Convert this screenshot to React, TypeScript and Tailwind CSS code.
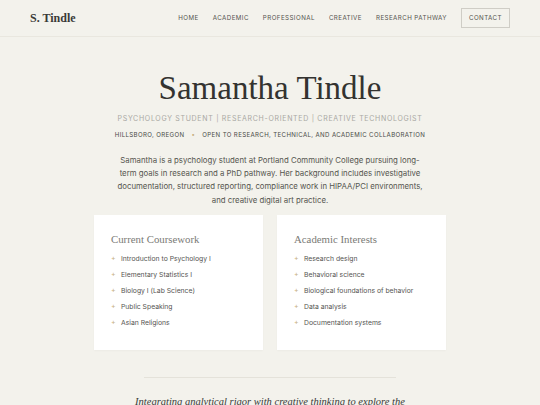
import React from "react";

const serif = { fontFamily: '"Liberation Serif", "DejaVu Serif", serif' };

const nav = ["Home", "Academic", "Professional", "Creative", "Research Pathway"];

const coursework = [
  "Introduction to Psychology I",
  "Elementary Statistics I",
  "Biology I (Lab Science)",
  "Public Speaking",
  "Asian Religions",
];

const interests = [
  "Research design",
  "Behavioral science",
  "Biological foundations of behavior",
  "Data analysis",
  "Documentation systems",
];

function Card({ title, items }: { title: string; items: string[] }) {
  return (
    <div className="bg-white px-[17px] pt-[19px] pb-[22px] shadow-[0_1px_2px_rgba(0,0,0,0.03)]">
      <h3 className="text-[10.8px] leading-none text-[#7a7a76]" style={serif}>
        {title}
      </h3>
      <ul className="mt-[9px] flex flex-col gap-[6px]">
        {items.map((item) => (
          <li key={item} className="flex items-center h-[10px] text-[6.8px] text-[#555552]">
            <span className="w-[10px] text-[#c6ae7d] text-[7px]">+</span>
            {item}
          </li>
        ))}
      </ul>
    </div>
  );
}

export default function App() {
  return (
    <div
      className="min-h-[405px] w-full bg-[#f3f2ec] text-[#333]"
      style={{ fontFamily: 'Inter, "Liberation Sans", sans-serif' }}
    >
      <header className="flex h-[37px] items-center justify-between border-b border-[#e9e7df] pl-[30px] pr-[30px]">
        <div className="text-[12px] font-bold text-[#3a3a38]" style={serif}>
          S. Tindle
        </div>
        <nav className="flex items-center gap-[14px]">
          {nav.map((n) => (
            <span
              key={n}
              className="text-[6.2px] uppercase tracking-[0.07em] text-[#55554f]"
            >
              {n}
            </span>
          ))}
          <span className="border border-[#cfcdc6] px-[7px] py-[4px] text-[6.2px] uppercase tracking-[0.07em] text-[#55554f]">
            Contact
          </span>
        </nav>
      </header>

      <main className="flex flex-col items-center">
        <h1 className="mt-[35px] text-[33px] leading-none text-[#333330]" style={serif}>
          Samantha Tindle
        </h1>
        <p className="mt-[9px] text-[7px] uppercase tracking-[0.1em] text-[#a9a8a3]">
          Psychology Student | Research-Oriented | Creative Technologist
        </p>
        <p className="mt-[5px] flex items-center gap-[7px] text-[6.1px] uppercase tracking-[0.06em] text-[#4a4a47]">
          <span>Hillsboro, Oregon</span>
          <span className="text-[#c6ae7d]">•</span>
          <span>Open to research, technical, and academic collaboration</span>
        </p>
        <p className="mt-[15px] w-[305px] text-center text-[7.8px] leading-[13.3px] text-[#55554f]">
          Samantha is a psychology student at Portland Community College pursuing long-term
          goals in research and a PhD pathway. Her background includes investigative
          documentation, structured reporting, compliance work in HIPAA/PCI environments,
          and creative digital art practice.
        </p>

        <div className="mt-[8px] grid w-[352px] grid-cols-2 gap-[14px]">
          <Card title="Current Coursework" items={coursework} />
          <Card title="Academic Interests" items={interests} />
        </div>

        <div className="mt-[27px] h-px w-[252px] bg-[#e4e2da]" />
        <p className="mt-[16px] text-[10.5px] italic text-[#3a3a38]" style={serif}>
          Integrating analytical rigor with creative thinking to explore the
        </p>
      </main>
    </div>
  );
}
